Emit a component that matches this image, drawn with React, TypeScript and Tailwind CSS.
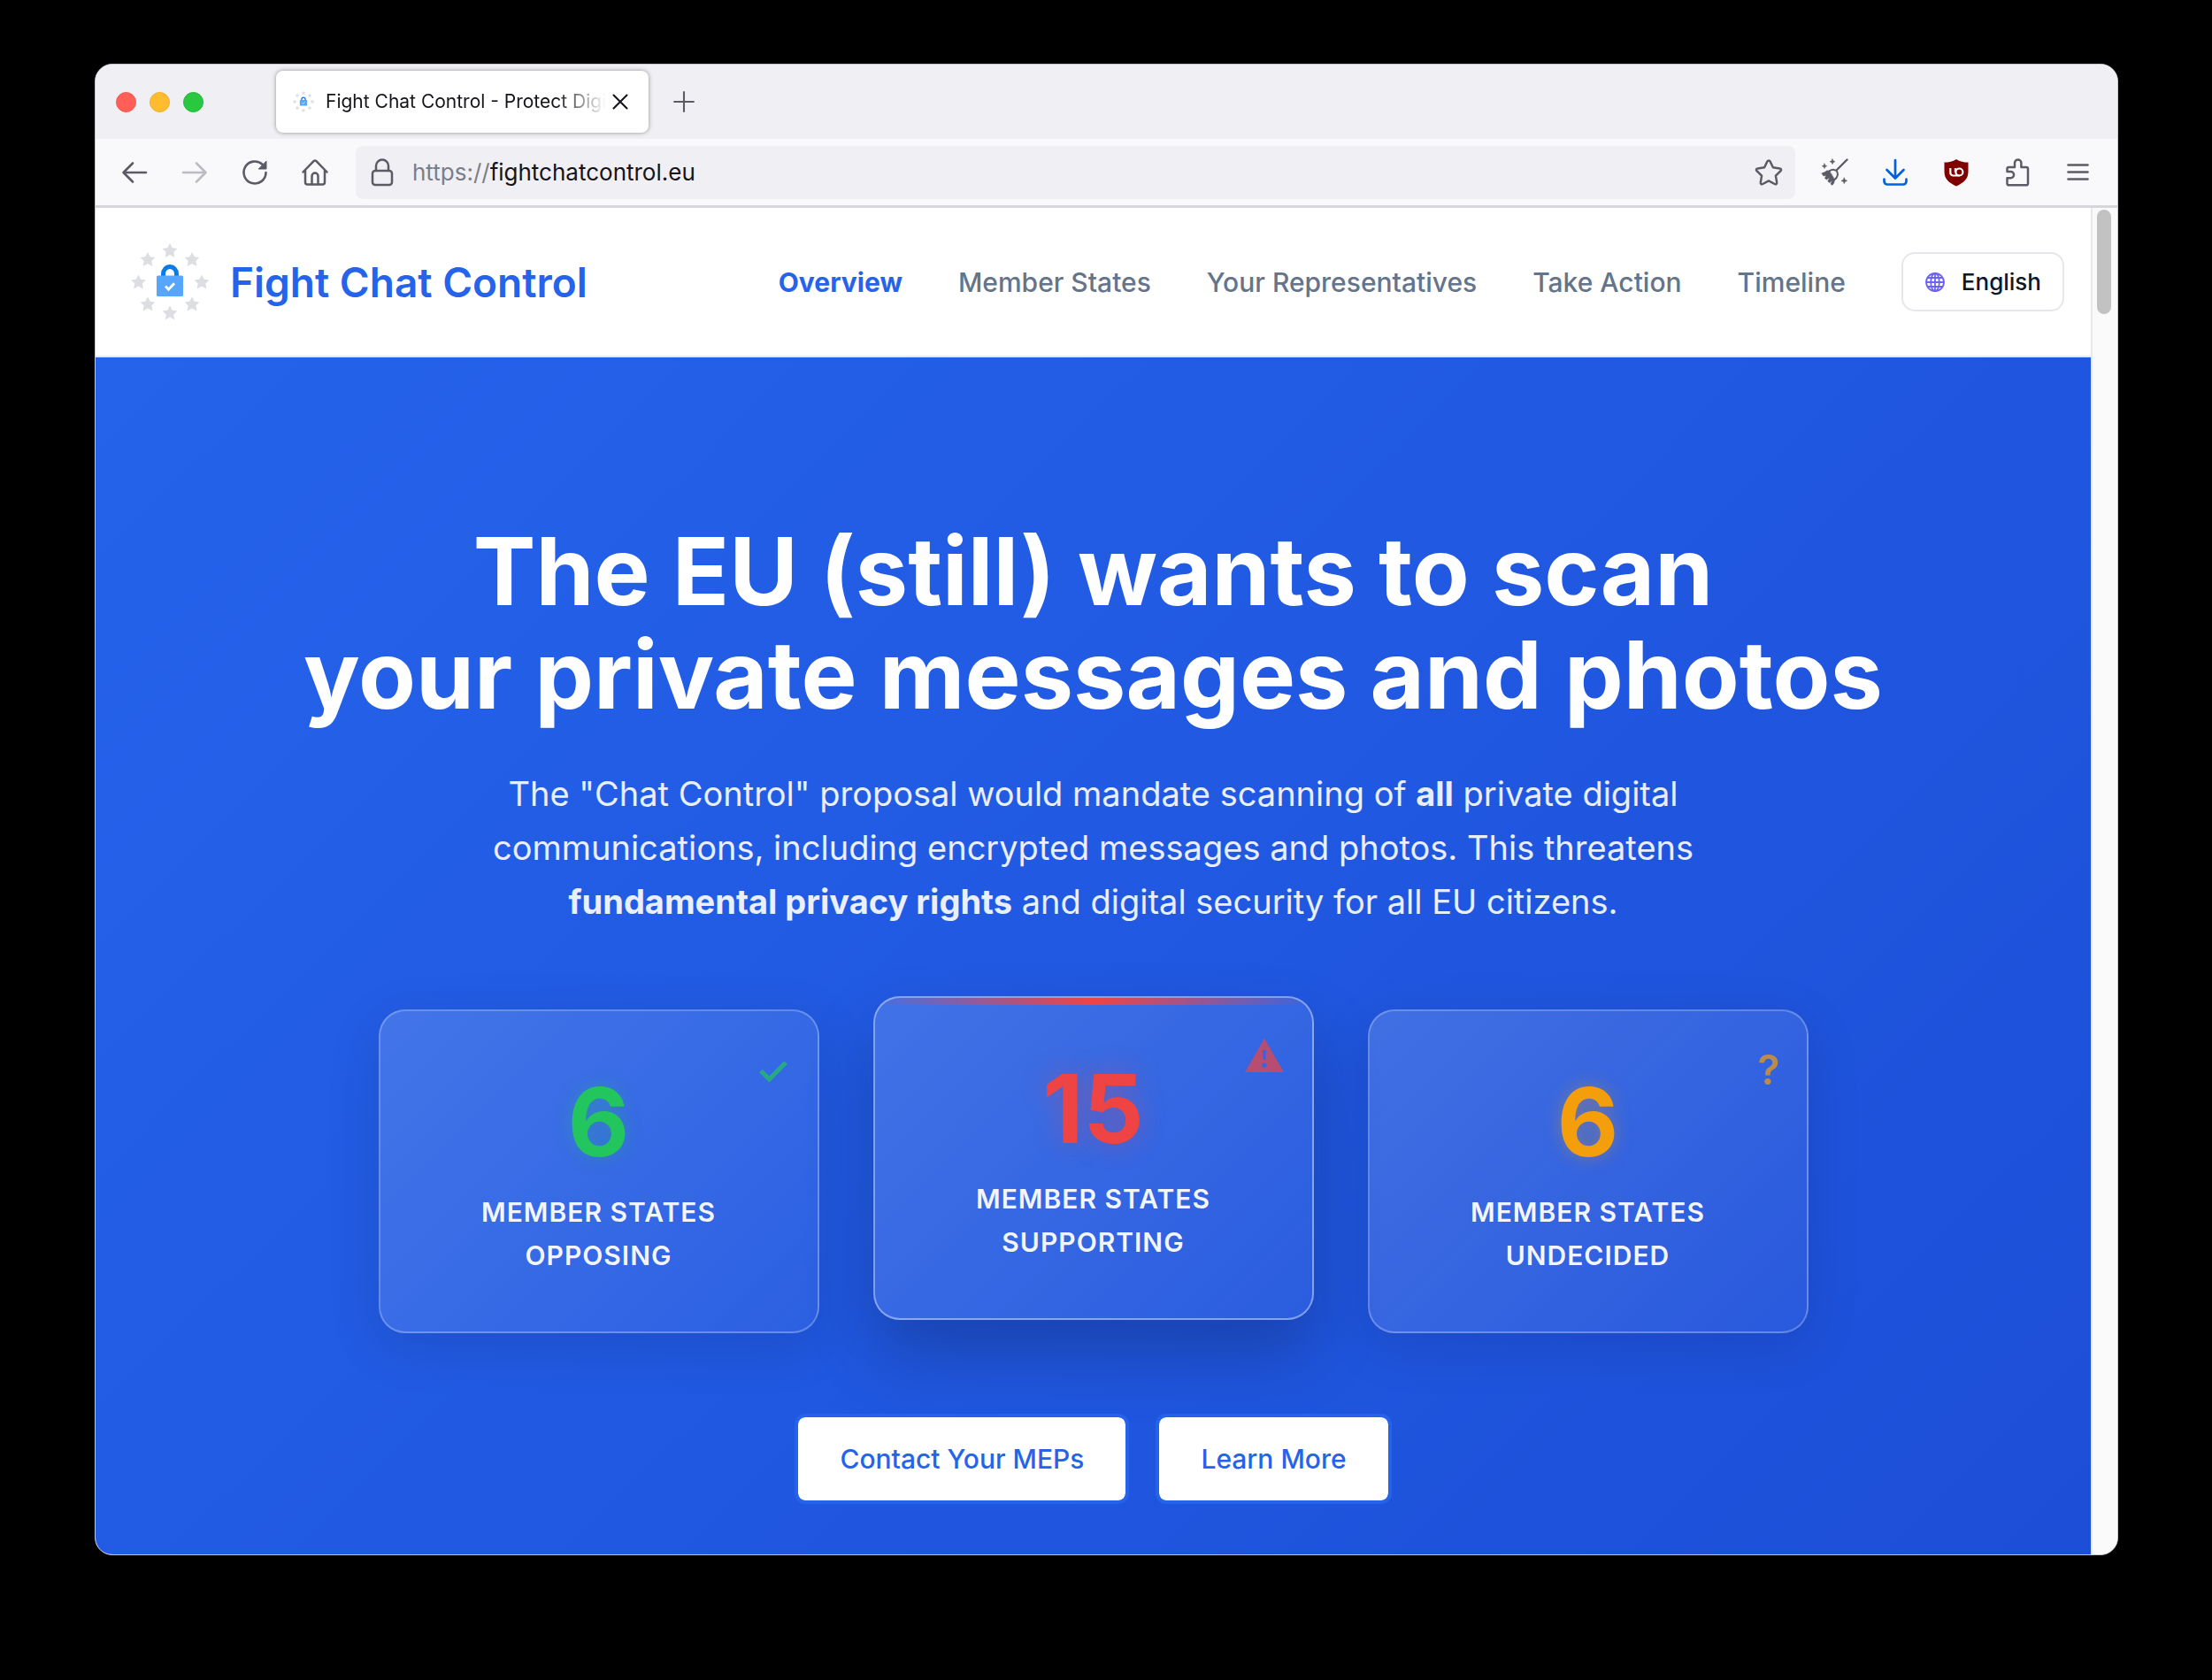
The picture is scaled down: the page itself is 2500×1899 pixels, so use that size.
import type { ReactNode } from "react";

const STAR = "M0 -8.6 L2.7 -3.2 L8.4 -2.5 L4.3 1.6 L5.4 7.4 L0 4.6 L-5.4 7.4 L-4.3 1.6 L-8.4 -2.5 L-2.7 -3.2 Z";
const STAR_POINTS = [
  [54, 18.5],
  [79, 28.5],
  [90, 54],
  [79, 79],
  [54, 89],
  [29, 79],
  [18.5, 54],
  [29, 28.5],
];

function SiteLogo({ className }: { className: string }) {
  return (
    <svg viewBox="0 0 108 108" className={className} aria-hidden="true">
      {STAR_POINTS.map(([x, y]) => (
        <path key={`${x}-${y}`} d={STAR} transform={`translate(${x} ${y})`} fill="#dcdee1" />
      ))}
      <path d="M46.5 48V44.5a7.5 8 0 0 1 15 0V48" fill="none" stroke="#0b7bea" strokeWidth="5" />
      <rect x="39" y="46.500" width="30" height="23.500" rx="1.500" fill="#57a6fd" />
      <path d="M49 58.500l3.500 3.700 6.500-7" fill="none" stroke="#fff" strokeWidth="2.800" />
    </svg>
  );
}

function Line({ children, className = "size-8", width = 2.5 }: { children: ReactNode; className?: string; width?: number }) {
  return (
    <svg
      viewBox="0 0 32 32"
      className={className}
      fill="none"
      stroke="currentColor"
      strokeWidth={width}
      strokeLinecap="round"
      strokeLinejoin="round"
      aria-hidden="true"
    >
      {children}
    </svg>
  );
}

function IconButton({ label, children, className = "text-[#5b5b66]" }: { label: string; children: ReactNode; className?: string }) {
  return (
    <button type="button" aria-label={label} className={`flex size-8 items-center justify-center ${className}`}>
      {children}
    </button>
  );
}

function TabStrip() {
  return (
    <div className="flex h-[84px] items-center bg-[#f0f0f4]">
      <div className="ml-[23px] flex gap-[15px]">
        <button type="button" aria-label="Close window" className="size-[23px] rounded-full border border-[#f2564f] bg-[#ff5f57]" />
        <button type="button" aria-label="Minimise window" className="size-[23px] rounded-full border border-[#eeae28] bg-[#febc2e]" />
        <button type="button" aria-label="Zoom window" className="size-[23px] rounded-full border border-[#23b837] bg-[#28c840]" />
      </div>
      <div className="ml-[82px] flex h-[70px] w-[421px] items-center rounded-lg bg-white pl-4 pr-5 shadow-[0_0_5px_rgba(0,0,0,0.4)]">
        <SiteLogo className="size-[30px] shrink-0" />
        <span className="ml-[10px] min-w-0 flex-1 overflow-hidden whitespace-nowrap text-[21px] leading-7 text-[#15141a] [mask-image:linear-gradient(to_right,black_82%,transparent_100%)]">
          Fight Chat Control - Protect Digital Privacy
        </span>
        <button type="button" aria-label="Close tab" className="ml-1 flex size-6 items-center justify-center text-[#15141a]">
          <Line className="size-6" width={2.8}>
            <path d="M6 6l20 20M26 6L6 26" />
          </Line>
        </button>
      </div>
      <button type="button" aria-label="New tab" className="ml-[28px] flex size-6 items-center justify-center text-[#5b5b66]">
        <Line className="size-6" width={2.8}>
          <path d="M16 1.500v29M1.500 16h29" />
        </Line>
      </button>
    </div>
  );
}

function Toolbar() {
  return (
    <div className="flex h-[78px] items-center border-b-[3px] border-[#d6d6da] bg-[#f9f9fb] pl-7 pr-7">
      <div className="flex gap-9">
        <IconButton label="Back">
          <Line width={2.6}>
            <path d="M29 16H4M14 5.500L3.500 16 14 26.500" />
          </Line>
        </IconButton>
        <IconButton label="Forward" className="text-[#bcbcc2]">
          <Line width={2.6}>
            <path d="M3 16h25M18 5.500L28.500 16 18 26.500" />
          </Line>
        </IconButton>
        <IconButton label="Reload">
          <Line width={2.6}>
            <path d="M28.500 16A12.500 12.500 0 1 1 24.500 6.800" />
            <path d="M29 3.500v8.500h-8.500z" fill="currentColor" strokeWidth="1" />
          </Line>
        </IconButton>
        <IconButton label="Home">
          <Line>
            <path d="M2.500 15.500L14.500 3.200a2.200 2.200 0 0 1 3 0L29.500 15.500M5 13.500V27a2.500 2.500 0 0 0 2.500 2.500h17A2.500 2.500 0 0 0 27 27V13.500" />
            <path d="M12.500 29v-9a3.500 3.500 0 0 1 7 0v9" />
          </Line>
        </IconButton>
      </div>
      <div className="ml-[30px] flex h-[60px] flex-1 items-center rounded-lg bg-[#f0f0f4] px-[14px] text-[#5b5b66]">
        <Line>
          <rect x="5" y="14" width="22" height="16" rx="3" />
          <path d="M9 14V8.500a7 7 0 0 1 14 0V14" />
        </Line>
        <label className="ml-[18px] flex flex-1 items-center text-[26px] leading-8">
          <span className="text-[#7d7d85]">https://</span>
          <input
            aria-label="Address"
            defaultValue="fightchatcontrol.eu"
            className="min-w-0 flex-1 bg-transparent text-[#15141a] outline-none"
          />
        </label>
        <IconButton label="Bookmark this page">
          <Line>
            <path d="M14.500 3.300a1.700 1.700 0 0 1 3 0l3.400 7 7.700 1.100a1.600 1.600 0 0 1 .9 2.800l-5.600 5.400 1.300 7.700a1.600 1.600 0 0 1-2.400 1.700L16 25.400 9.200 29a1.600 1.600 0 0 1-2.400-1.700l1.300-7.700-5.600-5.400a1.600 1.600 0 0 1 .9-2.800l7.700-1.100z" />
          </Line>
        </IconButton>
      </div>
      <div className="ml-7 flex gap-[37px]">
        <IconButton label="Clear browsing data">
          <Line width={2}>
            <path d="M30.500 1.500L18.500 13.500" strokeWidth="2.400" />
            <path d="M10.500 14.300C14 12 18.500 12.500 19.500 15.500C20.500 18.500 19 22 16.500 24" />
            <path
              d="M10.500 14.300L8 13.800C6 15.500 4 16.300 1.800 16.800L4 20L7 19L5.500 22.500L7.500 24L11 21.500L8.800 26L11 27.500L14 24.500L12 29L14 30.300C15.500 28.500 16.500 26.500 16.500 24Z"
              fill="currentColor"
              strokeWidth="0.600"
            />
            <path
              d="M5 6l.8 1.900 1.900.8-1.900.8L5 11.400l-.8-1.900-1.900-.8 1.900-.8zM14 .8l.9 2 2 .9-2 .9-.9 2-.9-2-2-.9 2-.9zM27.300 22l1 2.300 2.300 1-2.300 1-1 2.300-1-2.300-2.300-1 2.300-1z"
              fill="currentColor"
              strokeWidth="0.600"
            />
          </Line>
        </IconButton>
        <IconButton label="Downloads" className="text-[#0061e0]">
          <Line width={2.7}>
            <path d="M16 2v20M6.500 13L16 22.500 25.500 13M3.500 23.500V26a3.500 3.500 0 0 0 3.500 3.500h18a3.500 3.500 0 0 0 3.500-3.500v-2.500" />
          </Line>
        </IconButton>
        <IconButton label="uBlock Origin">
          <svg viewBox="0 0 32 32" className="size-8" aria-hidden="true">
            <path d="M16 1C12 3.800 7.500 4.600 2.500 4.600v10.400c0 8 5 12.500 13.500 16.500C24.500 27.500 29.500 23 29.500 15V4.600c-5 0-9.500-.8-13.500-3.600z" fill="#800000" />
            <g fill="none" stroke="#fff" strokeWidth="2.200">
              <path d="M9.300 11v5.300a3.200 3.200 0 0 0 3.200 3.200h7M14.900 11v4.500" />
              <circle cx="19.400" cy="15.500" r="4" />
            </g>
          </svg>
        </IconButton>
        <IconButton label="Extensions">
          <Line>
            <path d="M4.500 22.200V28.500a1.800 1.800 0 0 0 1.800 1.800h19.900a1.800 1.800 0 0 0 1.800-1.800V11.800a1.800 1.800 0 0 0-1.800-1.800H20.400V5.200a3.700 3.700 0 0 0-7.400 0V10H6.300a1.800 1.800 0 0 0-1.800 1.800V15h4a3.600 3.600 0 0 1 0 7.200z" />
          </Line>
        </IconButton>
        <IconButton label="Open application menu">
          <Line width={2.6}>
            <path d="M4.500 7.500h22M4.500 15.500h22M4.500 23.500h22" />
          </Line>
        </IconButton>
      </div>
    </div>
  );
}

const NAV = ["Member States", "Your Representatives", "Take Action", "Timeline"];

function SiteHeader() {
  return (
    <header className="flex h-[169px] items-center justify-between border-b-2 border-[#e2e8f0] bg-white px-[30px]">
      <a href="#top" className="flex items-center gap-[14px] whitespace-nowrap text-[46px] leading-[56px] font-semibold text-[#2563eb]">
        <SiteLogo className="size-[108px]" />
        Fight Chat Control
      </a>
      <nav className="flex items-center gap-[63px] whitespace-nowrap text-[30px] leading-[50px] font-medium text-[#64748b]">
        <a href="#overview" className="font-bold text-[#2563eb]">
          Overview
        </a>
        {NAV.map((item) => (
          <a key={item} href="#section">
            {item}
          </a>
        ))}
        <button
          type="button"
          className="flex h-[67px] items-center gap-[18px] rounded-[15px] border-2 border-[#e5e7eb] px-6 text-[26px] leading-8 font-medium text-[#0f172a]"
        >
          <svg viewBox="0 0 24 24" className="size-6" fill="none" stroke="#6c63f5" strokeWidth="1.800" aria-hidden="true">
            <circle cx="12" cy="12" r="10" />
            <ellipse cx="12" cy="12" rx="4.800" ry="10" />
            <path d="M12 2v20M2 12h20M3.500 7h17M3.500 17h17" />
          </svg>
          English
        </button>
      </nav>
    </header>
  );
}

function StatCard({ count, label, tone, icon, raised = false }: { count: number; label: string; tone: string; icon: ReactNode; raised?: boolean }) {
  return (
    <li
      className={`relative flex flex-1 flex-col items-center gap-[14px] overflow-hidden rounded-[30px] border-2 bg-linear-135 from-white/15 to-white/5 py-[61px] ${
        raised
          ? "-translate-y-[15px] border-white/40 shadow-[0_38px_76px_rgba(0,0,0,0.22)]"
          : "border-white/25 shadow-[0_15px_61px_rgba(0,0,0,0.12)]"
      }`}
    >
      {raised && <span className="absolute inset-x-0 top-0 h-2 bg-linear-to-r from-transparent via-[#ef4444] to-transparent" />}
      {icon}
      <span className={`text-[107px] leading-[128px] font-bold ${tone}`}>{count}</span>
      <span className="text-center text-[30px] leading-[49px] font-semibold tracking-[1px] text-white/95">
        MEMBER STATES
        <br />
        {label}
      </span>
    </li>
  );
}

function Hero() {
  return (
    <main className="bg-linear-135 from-[#2563eb] to-[#1d4ed8] pt-[183px] pb-[57px] text-center text-white">
      <h1 className="text-[106px] leading-[117px] font-bold">
        The EU (still) wants to scan
        <br />
        your private messages and photos
      </h1>
      <p className="mx-auto mt-[46px] max-w-[1430px] text-[38px] leading-[61px] text-white/90">
        The "Chat Control" proposal would mandate scanning of <strong className="font-bold">all</strong> private digital communications, including
        encrypted messages and photos. This threatens <strong className="font-bold">fundamental privacy rights</strong> and digital security for all
        EU citizens.
      </p>
      <ul className="mx-auto mt-[91px] flex max-w-[1616px] gap-[61px]">
        <StatCard
          count={6}
          label="OPPOSING"
          tone="text-[#22c55e] [text-shadow:0_0_20px_rgba(34,197,94,0.3)]"
          icon={
            <svg viewBox="0 0 32 24" className="absolute top-14 right-[34px] h-6 w-8 opacity-70" aria-hidden="true">
              <path d="M2 11.500l9.500 9.500L30 2" fill="none" stroke="#22c55e" strokeWidth="5" />
            </svg>
          }
        />
        <StatCard
          raised
          count={15}
          label="SUPPORTING"
          tone="text-[#ef4444] [text-shadow:0_0_30px_rgba(239,68,68,0.35)]"
          icon={
            <svg viewBox="0 0 44 38" className="absolute top-[46px] right-8 h-[38px] w-11 opacity-70" aria-hidden="true">
              <path
                fillRule="evenodd"
                fill="#ef4444"
                d="M22 0L44 38H0zM20 13l.6 11h2.800l.6-11zM22 27.500a2.700 2.700 0 1 0 0 5.400 2.700 2.700 0 1 0 0-5.400z"
              />
            </svg>
          }
        />
        <StatCard
          count={6}
          label="UNDECIDED"
          tone="text-[#f59e0b] [text-shadow:0_0_20px_rgba(245,158,11,0.35)]"
          icon={<span className="absolute top-9 right-[30px] text-[46px] leading-[61px] font-semibold text-[#f59e0b] opacity-70">?</span>}
        />
      </ul>
      <div className="mt-[91px] flex justify-center gap-[30px] text-[30px] leading-[50px] font-medium text-[#2563eb]">
        <a href="#contact" className="rounded-xl border-4 border-[#2563eb] bg-white bg-clip-padding px-[47px] py-[22px]">
          Contact Your MEPs
        </a>
        <a href="#learn" className="rounded-xl border-4 border-[#2563eb] bg-white bg-clip-padding px-[47px] py-[22px]">
          Learn More
        </a>
      </div>
    </main>
  );
}

export default function App() {
  return (
    <div className="min-h-screen bg-black pt-[72px] pr-[106px] pb-[141px] pl-[107px] font-['Inter',sans-serif]">
      <div className="overflow-hidden rounded-[20px] border border-[#c4c8d0] bg-white">
        <TabStrip />
        <Toolbar />
        <div className="flex">
          <div className="min-w-0 flex-1">
            <SiteHeader />
            <Hero />
          </div>
          <div className="w-[30px] border-l-2 border-[#e8e8e8] bg-[#fafafa] pt-0.5 pl-[5px]">
            <div className="h-[118px] w-4 rounded-full bg-[#c2c2c2]" />
          </div>
        </div>
      </div>
    </div>
  );
}
